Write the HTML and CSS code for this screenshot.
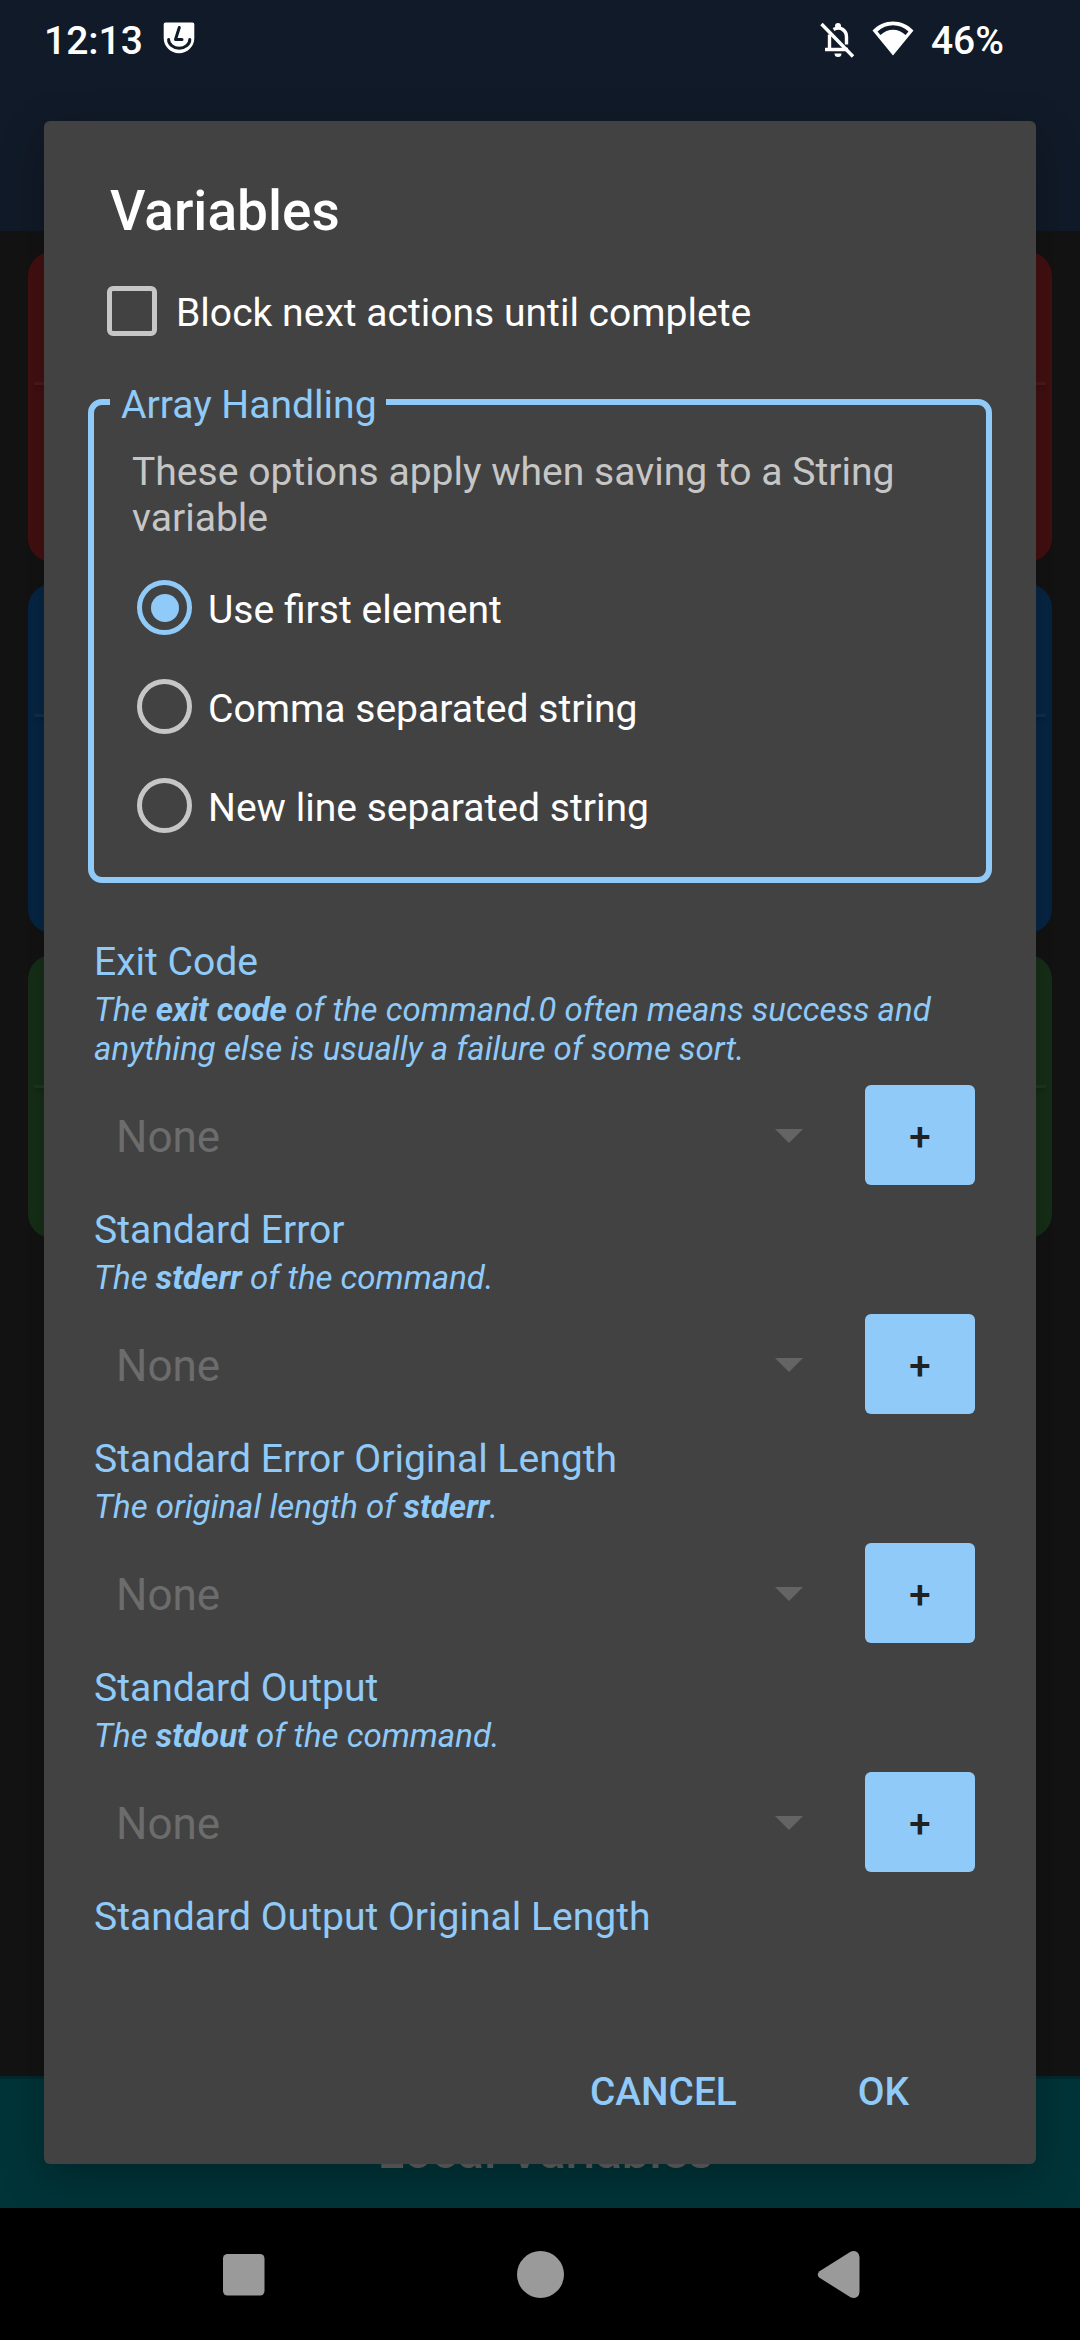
FILE: index.html
```html
<!DOCTYPE html>
<html lang="en">
<head>
<meta charset="utf-8">
<title>Variables</title>
<link rel="stylesheet" href="styles.css">
</head>
<body>
<div class="screen">
  <div class="appbar">
    <div class="status">
      <span class="clock">12:13</span>
      <svg class="logo" width="32" height="32" viewBox="0 0 32 32">
        <path fill="#fff" d="M2.5.5h27a1.8 1.8 0 0 1 1.8 1.8V16a15.3 15.3 0 0 1-30.6 0V2.3A1.8 1.8 0 0 1 2.5.5z"/>
        <path fill="none" stroke="#111a27" stroke-width="3" stroke-linecap="round" stroke-linejoin="round" d="M16.300 5.500 12.500 17.500H19"/>
        <path fill="none" stroke="#111a27" stroke-width="3" stroke-linecap="round" d="M5.600 17.500a10.600 8.800 0 0 0 21.200 0"/>
      </svg>
      <span class="grow"></span>
      <svg class="bell" width="36" height="36" viewBox="0 0 36 36">
        <g fill="none" stroke="#fff" stroke-width="3.400">
          <path d="M13.500 7.500C21 3.500 26.500 9 26.500 15v7.500"/>
          <path d="M9.500 12.500V27M5 27.500h23"/>
        </g>
        <circle cx="18" cy="4" r="3" fill="#fff"/>
        <path fill="#fff" d="M14.500 31.500h7a3.500 3.500 0 0 1-7 0z"/>
        <path stroke="#fff" stroke-width="3.400" d="M1.500 2 33 34.500"/>
      </svg>
      <svg class="wifi" width="42" height="35" viewBox="0 0 42 35">
        <path fill="#fff" fill-rule="evenodd" d="M21 34.500.5 9.500C12-2.500 30-2.500 41.500 9.500zM5.500 10.500 8.500 14C16 7 26 7 33.500 14L36.500 10.500C27.500 2 14.500 2 5.500 10.500z"/>
      </svg>
      <span class="battery">46%</span>
    </div>
  </div>
  <div class="cards">
    <div class="card red"><div class="rule"></div></div>
    <div class="card blue"><div class="rule"></div></div>
    <div class="card green"><div class="rule"></div></div>
  </div>
  <div class="locals">Local Variables</div>
  <div class="nav">
    <svg width="1080" height="132" viewBox="0 0 1080 132" fill="#9a9a9a">
      <rect x="223" y="46" width="41.500" height="41.500" rx="4.500"/>
      <circle cx="540.500" cy="66.500" r="23.500"/>
      <path d="M819.500 63.200 850.500 43.800Q854 42 857.300 44.200 859.500 46 859.500 49V84Q859.500 87 857.300 88.800 854 91 850.500 89.200L819.500 69.800Q816 66.500 819.500 63.200z"/>
    </svg>
  </div>

  <div class="dialog">
    <h1 class="title">Variables</h1>
    <div class="scroll">
      <label class="check"><span class="box"></span><span class="check-text">Block next actions until complete</span></label>
      <fieldset class="group">
        <legend class="legend">Array Handling</legend>
        <p class="hint">These options apply when saving to a String variable</p>
        <div class="radio on"><span class="ring"><span class="dot"></span></span><span class="option">Use first element</span></div>
        <div class="radio"><span class="ring"></span><span class="option">Comma separated string</span></div>
        <div class="radio"><span class="ring"></span><span class="option">New line separated string</span></div>
      </fieldset>
      <div class="fields">
        <section class="field">
          <h2 class="name">Exit Code</h2>
          <p class="desc">The <b>exit code</b> of the command.0 often means success and anything else is usually a failure of some sort.</p>
          <div class="row"><span class="value">None</span><span class="caret"></span><span class="add">+</span></div>
        </section>
        <section class="field">
          <h2 class="name">Standard Error</h2>
          <p class="desc">The <b>stderr</b> of the command.</p>
          <div class="row"><span class="value">None</span><span class="caret"></span><span class="add">+</span></div>
        </section>
        <section class="field">
          <h2 class="name">Standard Error Original Length</h2>
          <p class="desc">The original length of <b>stderr</b>.</p>
          <div class="row"><span class="value">None</span><span class="caret"></span><span class="add">+</span></div>
        </section>
        <section class="field">
          <h2 class="name">Standard Output</h2>
          <p class="desc">The <b>stdout</b> of the command.</p>
          <div class="row"><span class="value">None</span><span class="caret"></span><span class="add">+</span></div>
        </section>
        <section class="field">
          <h2 class="name">Standard Output Original Length</h2>
        </section>
      </div>
    </div>
    <div class="actions"><span>CANCEL</span><span>OK</span></div>
  </div>
</div>
</body>
</html>
```
FILE: styles.css
```css
* { box-sizing: border-box; margin: 0; padding: 0; }
body { font-family: Roboto, sans-serif; background: #000; }
.screen { position: relative; width: 1080px; height: 2340px; overflow: hidden; display: flex; flex-direction: column; background: #131313; }

.appbar { height: 231px; background: #111a28; }
.status { display: flex; align-items: flex-start; height: 80px; padding: 0 76px 0 44px; color: #fff; font-size: 39px; font-weight: 500; line-height: 46px; }
.clock, .battery { margin-top: 18px; }
.logo { margin: 22px 0 0 20px; }
.grow { flex: 1; }
.bell { margin: 22px 16px 0 0; }
.wifi { margin: 21px 17px 0 0; }

.cards { flex: 1; padding: 21px 28px 0; display: flex; flex-direction: column; gap: 22px; }
.card { border-radius: 24px; padding: 130px 6px 0; }
.rule { height: 3px; background: rgba(255, 255, 255, .045); box-shadow: 0 3px 3px rgba(0, 0, 0, .12); }
.red { height: 310px; background: #441011; }
.blue { height: 349px; background: #062645; }
.green { height: 283px; background: #162f17; }
.locals { height: 132px; background: #003438; border-top: 3px solid #002a2f; color: #626262; text-align: center; font-size: 49px; font-weight: 500; line-height: 56px; padding: 45px 0 0 11px; }
.nav { height: 132px; background: #000; position: relative; z-index: 2; }
.nav svg { display: block; }

.dialog { position: absolute; left: 44px; top: 121px; width: 992px; height: 2043px; border-radius: 6px; background: #424242; box-shadow: 0 14px 44px rgba(0, 0, 0, .26); display: flex; flex-direction: column; color: #fff; font-size: 39.1px; }
.title { margin: 60px 0 0 66px; font-size: 55px; font-weight: 500; line-height: 60px; }
.scroll { height: 1710px; padding: 45px 44px 0; overflow: hidden; }
.check { display: flex; align-items: center; height: 50px; padding-left: 19px; }
.box { width: 50px; height: 50px; border: 5.5px solid #c6c6c6; border-radius: 6px; margin-right: 19px; }
.check-text { line-height: 46px; padding-top: 3px; }
.group { margin-top: 40px; border: 6px solid #90caf9; border-radius: 14px; padding: 21px 38px 22px 16px; }
.legend { width: 276px; padding: 7px 0 0 11px; line-height: 45px; color: #90caf9; white-space: nowrap; }
.hint { margin: 0 0 17px 22px; color: #c6c6c6; line-height: 46px; }
.radio { display: flex; align-items: center; height: 99px; padding-left: 27px; }
.ring { width: 55px; height: 55px; border: 5.5px solid #c6c6c6; border-radius: 50%; margin-right: 16px; display: flex; align-items: center; justify-content: center; }
.on .ring { border-color: #90caf9; }
.dot { width: 28px; height: 28px; border-radius: 50%; background: #90caf9; }
.option { line-height: 46px; padding-top: 4px; }

.fields { padding: 56px 17px 0 6px; display: flex; flex-direction: column; gap: 22px; }
.name { font-size: 39.1px; font-weight: 400; line-height: 46px; color: #90caf9; }
.desc { margin: 5px 0 17px; font-size: 33px; font-style: italic; line-height: 39px; color: #90caf9; }
.row { display: flex; align-items: center; height: 100px; padding-left: 22px; }
.value { flex: 1; font-size: 44px; line-height: 52px; color: #6c6c6c; padding-top: 3px; }
.caret { border: solid transparent; border-width: 14px 14px 0; border-top-color: #646464; margin: 2px 62px 0 0; }
.add { width: 110px; height: 100px; border-radius: 6px; background: #90caf9; color: #212121; font-size: 38.5px; font-weight: 500; line-height: 103px; text-align: center; }
.actions { display: flex; justify-content: flex-end; gap: 121px; padding: 118px 127px 0 0; font-size: 38.8px; font-weight: 500; line-height: 46px; color: #90caf9; }
```
